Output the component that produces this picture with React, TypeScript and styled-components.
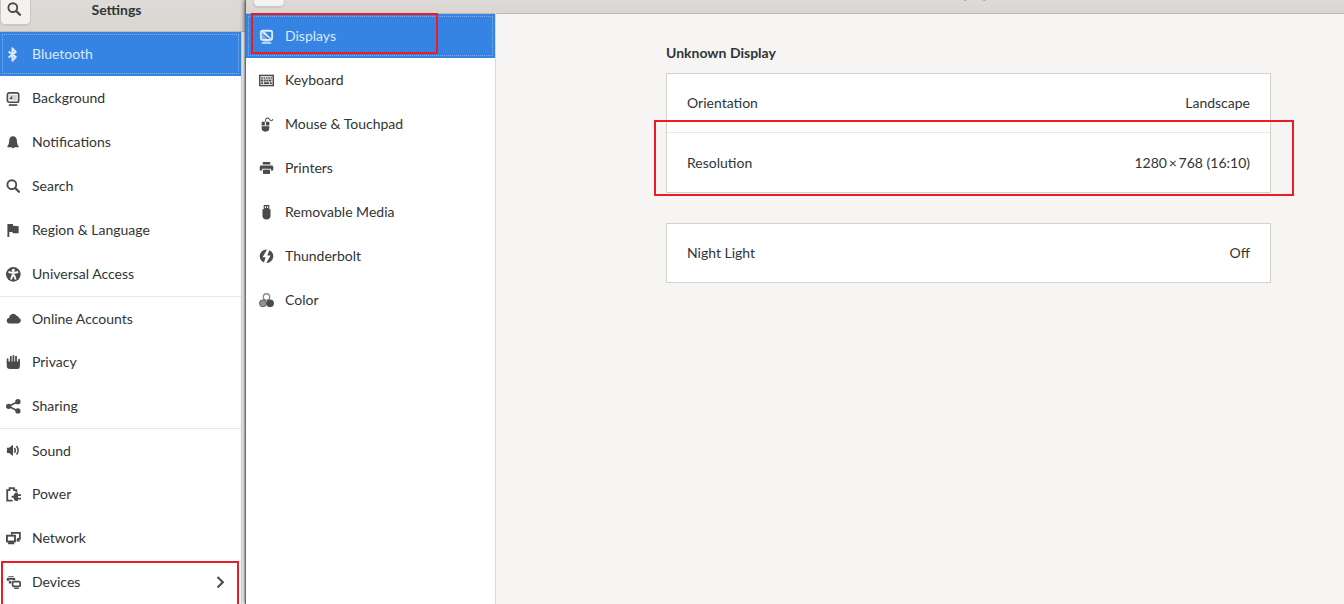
import React from 'react';
import styled, { createGlobalStyle, css } from 'styled-components';

const GlobalStyle = createGlobalStyle`
  *, *::before, *::after { box-sizing: border-box; }
  body {
    margin: 0;
    overflow: hidden;
    background: #f6f5f4;
    color: #303536;
    font-family: Lato, "Noto Sans", sans-serif;
    font-size: 14px;
    line-height: 20px;
  }
  button { font: inherit; color: inherit; }
`;

const Desktop = styled.div`
  display: grid;
  grid-template-columns: 246px minmax(0, 1fr);
  min-height: 100vh;
  overflow: hidden;
`;

const SettingsWindow = styled.section`
  display: flex;
  flex-direction: column;
  background: #fff;
`;

const DevicesWindow = styled.section`
  position: relative;
  display: grid;
  grid-template-columns: 250px minmax(0, 1fr);
  box-shadow: -1px 0 1px #6c6c6c, -2px 0 4px rgba(0, 0, 0, 0.5);
`;

const Pane = styled.div`
  display: flex;
  flex-direction: column;
  background: #fff;
  border-right: 1px solid #dcd8d5;
`;

const Header = styled.header<{ $short?: boolean }>`
  display: flex;
  align-items: flex-start;
  flex: none;
  height: ${(p) => (p.$short ? 14 : 32)}px;
  background: linear-gradient(#dedad7, #dad6d1);
  border-bottom: 1px solid #bfb9b3;
`;

const HeaderButton = styled.button<{ $short?: boolean }>`
  display: flex;
  justify-content: center;
  flex: none;
  width: ${(p) => (p.$short ? 32 : 31)}px;
  height: ${(p) => (p.$short ? 7 : 25)}px;
  margin-left: ${(p) => (p.$short ? 7 : 0)}px;
  padding: 2px 2px 0 0;
  border: 1px solid #cdc7c2;
  border-width: 0 1px 1px;
  border-radius: 0 0 5px 5px;
  background: #f3f2f0;
  box-shadow: 0 1px 1px rgba(0, 0, 0, 0.08);
`;

const WindowTitle = styled.h1`
  flex: 1;
  margin: 0;
  padding-right: 44px;
  font-size: 14px;
  line-height: 20px;
  font-weight: 700;
  text-align: center;
`;

const ClippedHeader = styled(Header)`
  align-items: flex-end;
  justify-content: center;
  overflow: hidden;
  padding: 0 0 10px 98px;
`;

const ClippedTitle = styled.h1`
  margin: 0;
  color: #a5a3a1;
  font-size: 14px;
  line-height: 18px;
`;

const NavList = styled.ul<{ $inset?: boolean }>`
  width: ${(p) => (p.$inset ? '242px' : 'auto')};
  margin: 0;
  padding: 0;
  list-style: none;
  border-right: ${(p) => (p.$inset ? '1px solid #dcd8d5' : 'none')};
  flex: 1;
`;

const NavItem = styled.li<{ $divided?: boolean }>`
  position: relative;
  height: 44px;
  border-top: ${(p) => (p.$divided ? '1px solid #ebe9e8' : 'none')};
`;

const NavButton = styled.button<{ $selected?: boolean; $indent?: boolean }>`
  display: flex;
  align-items: center;
  gap: 11px;
  width: 100%;
  height: 100%;
  padding: 0 13px 0 ${(p) => (p.$indent ? 13 : 6)}px;
  border: 0;
  background: none;
  text-align: left;
  ${(p) =>
    p.$selected &&
    css`
      background: #3584e4;
      color: #dce9fa;
      outline: 1px dotted #7fb0ec;
      outline-offset: -3px;
    `}
`;

const NavLabel = styled.span`
  flex: 1;
`;

const Glyph = styled.svg<{ $size?: number; $muted?: boolean }>`
  flex: none;
  width: ${(p) => p.$size ?? 15}px;
  height: ${(p) => p.$size ?? 15}px;
  color: ${(p) => (p.$muted ? 'inherit' : '#4a4b4c')};
`;

const Highlight = styled.span`
  position: absolute;
  z-index: 1;
  border: 2px solid #ed1c24;
  pointer-events: none;
`;

const DevicesHighlight = styled(Highlight)`
  inset: 1px 2px 0 1px;
  border-bottom: 0;
`;

const DisplaysHighlight = styled(Highlight)`
  inset: -1px 57px 4px 5px;
`;

const ResolutionHighlight = styled(Highlight)`
  inset: -13px -24px -4px -13px;
`;

const Main = styled.main`
  display: flex;
  flex-direction: column;
  background: #f6f5f4;
`;

const Content = styled.div`
  padding: 29px 73px 29px 170px;
`;

const SectionTitle = styled.h2`
  margin: 0 0 10px;
  font-size: 14px;
  line-height: 20px;
`;

const OptionList = styled.div`
  margin-bottom: 30px;
  background: #fff;
  border: 1px solid #d5d0cc;
`;

const OptionRow = styled.div`
  position: relative;
  & + & { border-top: 1px solid #ebe9e8; }
`;

const OptionButton = styled.button`
  display: flex;
  align-items: center;
  justify-content: space-between;
  width: 100%;
  height: 58px;
  padding: 0 20px;
  border: 0;
  background: none;
  text-align: left;
  ${OptionRow} + ${OptionRow} & { height: 59px; }
`;

const line = { fill: 'none', stroke: 'currentColor' } as const;

const glyphs: Record<string, React.ReactNode> = {
  search: (
    <g {...line} strokeWidth="2">
      <circle cx="6.2" cy="6" r="4.7" />
      <path d="M9.800 9.600l4 4" strokeWidth="2.5" strokeLinecap="round" />
    </g>
  ),
  bluetooth: <path {...line} strokeWidth="2.1" strokeLinejoin="round" d="M2.800 4.800l7.600 6L6.900 14.600V1.400l3.500 3.800-7.600 6" />,
  background: (
    <>
      <rect x="1.500" y="2" width="12" height="10" rx="2" {...line} strokeWidth="1.800" />
      <rect x="3.500" y="4" width="8" height="6" fill="currentColor" opacity=".25" />
      <path d="M3.500 8.500L6.500 5v3.500z" fill="currentColor" />
      <path d="M3 15h9" {...line} strokeWidth="1.800" />
    </>
  ),
  bell: <path fill="currentColor" d="M7.500 1.200c-2.700 0-4 2-4.100 4.600C3.300 9 2.700 10.600 1.500 12v1h4.400a1.700 1.700 0 0 0 3.200 0h4.400v-1c-1.200-1.400-1.800-3-1.900-6.200C11.500 3.200 10.200 1.200 7.500 1.200z" />,
  flag: <path fill="currentColor" d="M1.500 1h6v2l6 .5V11H7V9.500H3.500V15h-2z" />,
  access: (
    <>
      <circle cx="7.800" cy="7.800" r="7.800" fill="currentColor" />
      <circle cx="7.800" cy="3.600" r="1.700" fill="#fff" />
      <path d="M2.600 5.300L7.800 6.500 13 5.300M7.800 6v4M7 8.500L5.300 13.300M8.600 8.500l1.700 4.800" {...line} stroke="#fff" strokeWidth="2" />
    </>
  ),
  cloud: <path fill="currentColor" d="M3 13.200h10a3 3 0 0 0 .6-5.900A2.600 2.600 0 0 0 11.200 5 4.200 4.200 0 0 0 3.500 6.500v.8a3 3 0 0 0-.5 5.900z" />,
  hand: (
    <>
      <path fill="currentColor" d="M.8 7h14v5.500a2.500 2.500 0 0 1-2.500 2.500h-8A3.500 3.500 0 0 1 .8 11.500z" />
      <path d="M1.700 8V4.500M5.100 9V1.800M7.900 9V1M10.700 9V1.800M13.900 9V5" {...line} strokeWidth="1.900" strokeLinecap="round" />
    </>
  ),
  share: (
    <g fill="currentColor">
      <circle cx="2.800" cy="7.800" r="2.800" />
      <circle cx="12.700" cy="2.900" r="2.800" />
      <circle cx="12.700" cy="12.700" r="2.800" />
      <path d="M12.700 3l-10 4.800 10 4.900" {...line} strokeWidth="1.800" />
    </g>
  ),
  sound: (
    <>
      <path fill="currentColor" d="M1 5h2.300L7.500 1.800v12L3.300 10.600H1z" />
      <path d="M9 5.200c1.200 1.600 1.200 3.600 0 5.200M11.200 3.200c2.200 2.900 2.200 6.300 0 9.200" {...line} strokeWidth="1.600" />
    </>
  ),
  power: (
    <>
      <path d="M7 14.600H1.300V3.300h2.500V1.100h4.700v2.200H11v2.200" {...line} strokeWidth="1.900" />
      <path fill="currentColor" d="M6 9.300h2.200A3.400 3.400 0 0 1 11.500 6h1.300v1.800H16v1.700h-3.200v2H16v1.700h-3.200V15h-1.300a3.400 3.400 0 0 1-3.300-3.500H6z" />
    </>
  ),
  network: (
    <>
      <path d="M6.200 4V2h8.600v6.400H12" {...line} strokeWidth="1.900" />
      <rect x="1" y="5" width="8.600" height="6.200" {...line} strokeWidth="2" />
      <path fill="currentColor" d="M3 11h5l1.200 3.200H1.800zM11.500 8.500h2l1.700 2.800h-4z" />
    </>
  ),
  devices: (
    <>
      <path fill="currentColor" d="M2.500 1.200h5.800v1.300h-5.800zM.8 3.300h9v2.200H7V5H3.500v1H.8zM3 6.500h2.800V9H3z" />
      <rect x="7.100" y="7" width="8" height="5.200" rx="1" {...line} strokeWidth="1.800" />
      <path d="M8.800 14.200h4.800" {...line} strokeWidth="1.500" />
    </>
  ),
  display: (
    <>
      <rect x="2" y="1.800" width="12" height="9.800" rx="2" {...line} strokeWidth="2" />
      <path fill="currentColor" d="M3.500 2.500h2l7.500 7.500v1.500L3.500 4.500z" />
      <path fill="currentColor" opacity=".45" d="M3 5l6 6H3z" />
      <path d="M4.500 12.700h7M3 14.900h10" {...line} strokeWidth="1.500" />
    </>
  ),
  keyboard: (
    <>
      <rect x=".8" y="2.600" width="14.400" height="10.800" {...line} strokeWidth="1.600" />
      <path d="M2.300 5.300h11.600" {...line} strokeWidth="1.700" strokeDasharray="1.800 .7" />
      <path d="M2 8h12" {...line} strokeWidth="1.900" strokeDasharray="2.300 .6" />
      <path d="M2.300 10.800h2.200M5.300 10.800h5.400M11.500 10.800h2.200" {...line} strokeWidth="1.800" />
    </>
  ),
  mouse: (
    <>
      <path fill="currentColor" d="M2.800 5H6.200v4H2.800zM7.400 5h3.600v4H7.400zM2.800 9.800h8.200v1.700a4.100 4.100 0 0 1-8.200 0z" />
      <path d="M6.800 5C6.800 2 8.200.8 9.900 1.200c1.500.5 1.800 3 3.300 2.800 1-.1 1.300-.8 1.600-1.800" {...line} strokeWidth="1.100" />
    </>
  ),
  printer: (
    <>
      <path fill="currentColor" d="M4 1h8v2.800H4zM2.300 4.800h11.400A1.500 1.500 0 0 1 15.200 6.300V10h-2.500V8.200H3.300V10H.8V6.300A1.500 1.500 0 0 1 2.300 4.800z" />
      <path fill="currentColor" d="M4.300 9.200h7.400v4.600H4.300z" />
    </>
  ),
  usb: (
    <path fill="currentColor" fillRule="evenodd" d="M5 0h6v4.500h1.300v7A4 4 0 0 1 8.800 15.500H7.200a4 4 0 0 1-3.500-4v-7H5zM6.200 1.300v2h1.200v-2zM8.600 1.300v2h1.200v-2z" />
  ),
  thunderbolt: (
    <>
      <circle cx="8" cy="7.800" r="7.200" fill="currentColor" />
      <path fill="#fff" d="M8.800 0L3.800 8.800h3.200L4.800 16h2.400L12.400 7H8.900l2.600-7z" />
    </>
  ),
  color: (
    <>
      <circle cx="8" cy="4.200" r="3.400" {...line} strokeWidth="1.400" opacity=".65" />
      <circle cx="4.200" cy="11" r="4.100" fill="currentColor" opacity=".6" />
      <circle cx="11.800" cy="11" r="4.100" fill="currentColor" />
      <circle cx="4.200" cy="11" r="3.600" {...line} strokeWidth="1" opacity=".6" />
    </>
  ),
  chevron: <path d="M4.800 2.200l5.700 5.600-5.700 5.600" {...line} strokeWidth="2.200" />,
};

function Icon({ name, size, muted }: { name: string; size?: number; muted?: boolean }) {
  return (
    <Glyph viewBox="0 0 16 16" aria-hidden="true" $size={size} $muted={muted}>
      {glyphs[name]}
    </Glyph>
  );
}

type Entry = { label: string; icon: string; divided?: boolean };

const settings: Entry[] = [
  { label: 'Bluetooth', icon: 'bluetooth' },
  { label: 'Background', icon: 'background' },
  { label: 'Notifications', icon: 'bell' },
  { label: 'Search', icon: 'search' },
  { label: 'Region & Language', icon: 'flag' },
  { label: 'Universal Access', icon: 'access' },
  { label: 'Online Accounts', icon: 'cloud', divided: true },
  { label: 'Privacy', icon: 'hand' },
  { label: 'Sharing', icon: 'share' },
  { label: 'Sound', icon: 'sound', divided: true },
  { label: 'Power', icon: 'power' },
  { label: 'Network', icon: 'network' },
  { label: 'Devices', icon: 'devices' },
];

const devices: Entry[] = [
  { label: 'Displays', icon: 'display' },
  { label: 'Keyboard', icon: 'keyboard' },
  { label: 'Mouse & Touchpad', icon: 'mouse' },
  { label: 'Printers', icon: 'printer' },
  { label: 'Removable Media', icon: 'usb' },
  { label: 'Thunderbolt', icon: 'thunderbolt' },
  { label: 'Color', icon: 'color' },
];

function Option({ label, value, children }: { label: string; value: string; children?: React.ReactNode }) {
  return (
    <OptionRow>
      <OptionButton type="button">
        <span>{label}</span>
        <span>{value}</span>
      </OptionButton>
      {children}
    </OptionRow>
  );
}

export default function App() {
  return (
    <>
      <GlobalStyle />
      <Desktop>
        <SettingsWindow>
          <Header>
            <HeaderButton type="button" aria-label="Search settings">
              <Icon name="search" />
            </HeaderButton>
            <WindowTitle>Settings</WindowTitle>
          </Header>
          <NavList $inset>
            {settings.map((item) => (
              <NavItem key={item.label} $divided={item.divided}>
                <NavButton type="button" $selected={item.label === 'Bluetooth'}>
                  <Icon name={item.icon} muted={item.label === 'Bluetooth'} />
                  <NavLabel>{item.label}</NavLabel>
                  {item.label === 'Devices' && <Icon name="chevron" />}
                </NavButton>
                {item.label === 'Devices' && <DevicesHighlight />}
              </NavItem>
            ))}
          </NavList>
        </SettingsWindow>
        <DevicesWindow>
          <Pane>
            <Header $short>
              <HeaderButton $short type="button" aria-label="Back" />
            </Header>
            <NavList>
              {devices.map((item) => (
                <NavItem key={item.label}>
                  <NavButton type="button" $indent $selected={item.label === 'Displays'}>
                    <Icon name={item.icon} muted={item.label === 'Displays'} />
                    <NavLabel>{item.label}</NavLabel>
                  </NavButton>
                  {item.label === 'Displays' && <DisplaysHighlight />}
                </NavItem>
              ))}
            </NavList>
          </Pane>
          <Main>
            <ClippedHeader $short>
              <ClippedTitle>Displays</ClippedTitle>
            </ClippedHeader>
            <Content>
              <SectionTitle>Unknown Display</SectionTitle>
              <OptionList>
                <Option label="Orientation" value="Landscape" />
                <Option label="Resolution" value={'1280\u2009×\u2009768 (16:10)'}>
                  <ResolutionHighlight />
                </Option>
              </OptionList>
              <OptionList>
                <Option label="Night Light" value="Off" />
              </OptionList>
            </Content>
          </Main>
        </DevicesWindow>
      </Desktop>
    </>
  );
}
